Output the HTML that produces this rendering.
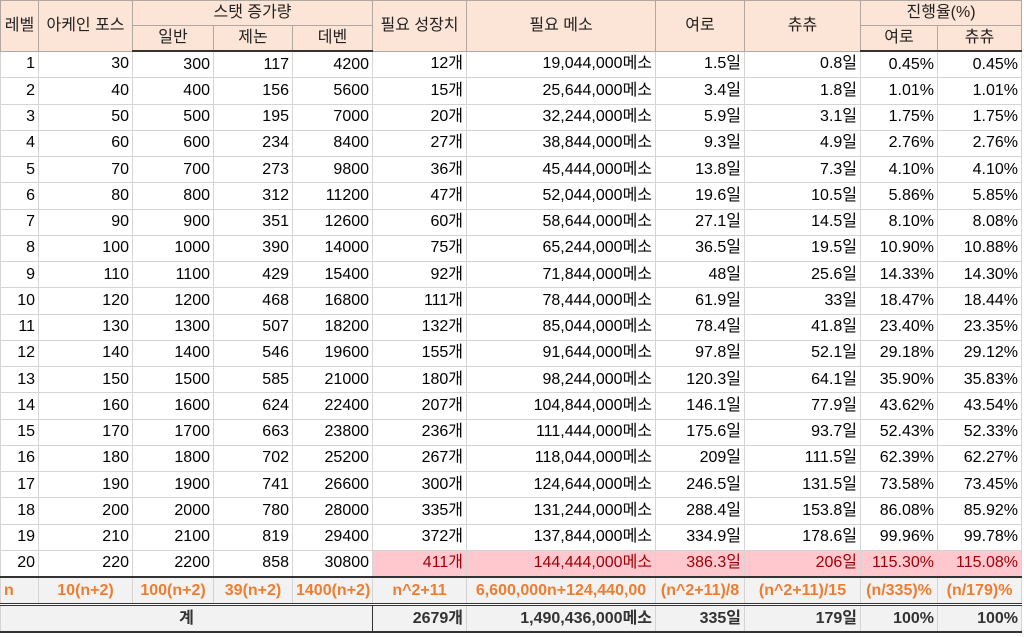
<!DOCTYPE html>
<html><head><meta charset="utf-8"><style>
body{margin:0;background:#fff;width:1024px;height:637px;overflow:hidden;font-family:"Liberation Sans","Noto Sans CJK KR",sans-serif;}
table{border-collapse:collapse;table-layout:fixed;width:1021px;font-size:16px;color:#000;border-bottom:2px solid #333;border-right:1px solid #333;}
td{border:1px solid #d4d4d4;height:25.25px;padding:0 3px;text-align:right;white-space:nowrap;overflow:hidden;line-height:24px;}
th{background:#fce4d6;border:1px solid #b0a8a0;font-weight:normal;height:24px;padding:0;line-height:22px;color:#222;}
thead tr:last-child th{border-bottom:2px solid #333;}
.c{text-align:center}
.p td.h{background:#ffc7ce;color:#9c0006}
.f td{background:#f2f2f2;color:#ed7d31;font-weight:bold;text-align:center;border-bottom:3px double #333;height:25px}
.t td{background:#f2f2f2;font-weight:bold;color:#333;height:25px}
.sep td{border-top:1px solid #999}
</style></head><body>
<table>
<colgroup><col style="width:38px"><col style="width:94px"><col style="width:81px"><col style="width:79px"><col style="width:80px"><col style="width:94px"><col style="width:189px"><col style="width:89px"><col style="width:116px"><col style="width:77px"><col style="width:84px"></colgroup>
<thead>
<tr><th rowspan="2">레벨</th><th rowspan="2">아케인 포스</th><th colspan="3">스탯 증가량</th><th rowspan="2">필요 성장치</th><th rowspan="2">필요 메소</th><th rowspan="2">여로</th><th rowspan="2">츄츄</th><th colspan="2">진행율(%)</th></tr>
<tr><th>일반</th><th>제논</th><th>데벤</th><th>여로</th><th>츄츄</th></tr>
</thead>
<tbody>
<tr><td>1</td><td>30</td><td>300</td><td>117</td><td>4200</td><td>12개</td><td>19,044,000메소</td><td>1.5일</td><td>0.8일</td><td>0.45%</td><td>0.45%</td></tr>
<tr><td>2</td><td>40</td><td>400</td><td>156</td><td>5600</td><td>15개</td><td>25,644,000메소</td><td>3.4일</td><td>1.8일</td><td>1.01%</td><td>1.01%</td></tr>
<tr><td>3</td><td>50</td><td>500</td><td>195</td><td>7000</td><td>20개</td><td>32,244,000메소</td><td>5.9일</td><td>3.1일</td><td>1.75%</td><td>1.75%</td></tr>
<tr><td>4</td><td>60</td><td>600</td><td>234</td><td>8400</td><td>27개</td><td>38,844,000메소</td><td>9.3일</td><td>4.9일</td><td>2.76%</td><td>2.76%</td></tr>
<tr><td>5</td><td>70</td><td>700</td><td>273</td><td>9800</td><td>36개</td><td>45,444,000메소</td><td>13.8일</td><td>7.3일</td><td>4.10%</td><td>4.10%</td></tr>
<tr><td>6</td><td>80</td><td>800</td><td>312</td><td>11200</td><td>47개</td><td>52,044,000메소</td><td>19.6일</td><td>10.5일</td><td>5.86%</td><td>5.85%</td></tr>
<tr><td>7</td><td>90</td><td>900</td><td>351</td><td>12600</td><td>60개</td><td>58,644,000메소</td><td>27.1일</td><td>14.5일</td><td>8.10%</td><td>8.08%</td></tr>
<tr><td>8</td><td>100</td><td>1000</td><td>390</td><td>14000</td><td>75개</td><td>65,244,000메소</td><td>36.5일</td><td>19.5일</td><td>10.90%</td><td>10.88%</td></tr>
<tr><td>9</td><td>110</td><td>1100</td><td>429</td><td>15400</td><td>92개</td><td>71,844,000메소</td><td>48일</td><td>25.6일</td><td>14.33%</td><td>14.30%</td></tr>
<tr class="sep"><td>10</td><td>120</td><td>1200</td><td>468</td><td>16800</td><td>111개</td><td>78,444,000메소</td><td>61.9일</td><td>33일</td><td>18.47%</td><td>18.44%</td></tr>
<tr><td>11</td><td>130</td><td>1300</td><td>507</td><td>18200</td><td>132개</td><td>85,044,000메소</td><td>78.4일</td><td>41.8일</td><td>23.40%</td><td>23.35%</td></tr>
<tr><td>12</td><td>140</td><td>1400</td><td>546</td><td>19600</td><td>155개</td><td>91,644,000메소</td><td>97.8일</td><td>52.1일</td><td>29.18%</td><td>29.12%</td></tr>
<tr><td>13</td><td>150</td><td>1500</td><td>585</td><td>21000</td><td>180개</td><td>98,244,000메소</td><td>120.3일</td><td>64.1일</td><td>35.90%</td><td>35.83%</td></tr>
<tr><td>14</td><td>160</td><td>1600</td><td>624</td><td>22400</td><td>207개</td><td>104,844,000메소</td><td>146.1일</td><td>77.9일</td><td>43.62%</td><td>43.54%</td></tr>
<tr class="sep"><td>15</td><td>170</td><td>1700</td><td>663</td><td>23800</td><td>236개</td><td>111,444,000메소</td><td>175.6일</td><td>93.7일</td><td>52.43%</td><td>52.33%</td></tr>
<tr><td>16</td><td>180</td><td>1800</td><td>702</td><td>25200</td><td>267개</td><td>118,044,000메소</td><td>209일</td><td>111.5일</td><td>62.39%</td><td>62.27%</td></tr>
<tr><td>17</td><td>190</td><td>1900</td><td>741</td><td>26600</td><td>300개</td><td>124,644,000메소</td><td>246.5일</td><td>131.5일</td><td>73.58%</td><td>73.45%</td></tr>
<tr><td>18</td><td>200</td><td>2000</td><td>780</td><td>28000</td><td>335개</td><td>131,244,000메소</td><td>288.4일</td><td>153.8일</td><td>86.08%</td><td>85.92%</td></tr>
<tr><td>19</td><td>210</td><td>2100</td><td>819</td><td>29400</td><td>372개</td><td>137,844,000메소</td><td>334.9일</td><td>178.6일</td><td>99.96%</td><td>99.78%</td></tr>
<tr class="p" style="border-bottom:2px solid #333"><td>20</td><td>220</td><td>2200</td><td>858</td><td>30800</td><td class="h">411개</td><td class="h">144,444,000메소</td><td class="h">386.3일</td><td class="h">206일</td><td class="h">115.30%</td><td class="h">115.08%</td></tr>
<tr class="f"><td style="text-align:left">n</td><td>10(n+2)</td><td>100(n+2)</td><td>39(n+2)</td><td>1400(n+2)</td><td>n^2+11</td><td>6,600,000n+124,440,00</td><td>(n^2+11)/8</td><td>(n^2+11)/15</td><td>(n/335)%</td><td>(n/179)%</td></tr>
<tr class="t"><td colspan="5" class="c" style="border-right:1px solid #333">계</td><td>2679개</td><td>1,490,436,000메소</td><td>335일</td><td>179일</td><td>100%</td><td>100%</td></tr>
</tbody></table>
</body></html>
